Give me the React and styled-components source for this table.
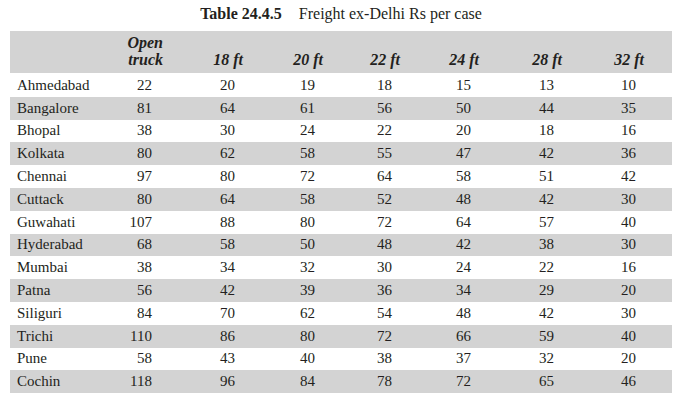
import React from 'react'
import styled, { createGlobalStyle } from 'styled-components'

const GlobalStyle = createGlobalStyle`
  body {
    margin: 0;
    background: #fff;
    font-family: "Liberation Serif", "DejaVu Serif", serif;
    color: #231f20;
  }
`;

const columns = ['Open truck', '18 ft', '20 ft', '22 ft', '24 ft', '28 ft', '32 ft'];

const rows = [
  ['Ahmedabad', 22, 20, 19, 18, 15, 13, 10],
  ['Bangalore', 81, 64, 61, 56, 50, 44, 35],
  ['Bhopal', 38, 30, 24, 22, 20, 18, 16],
  ['Kolkata', 80, 62, 58, 55, 47, 42, 36],
  ['Chennai', 97, 80, 72, 64, 58, 51, 42],
  ['Cuttack', 80, 64, 58, 52, 48, 42, 30],
  ['Guwahati', 107, 88, 80, 72, 64, 57, 40],
  ['Hyderabad', 68, 58, 50, 48, 42, 38, 30],
  ['Mumbai', 38, 34, 32, 30, 24, 22, 16],
  ['Patna', 56, 42, 39, 36, 34, 29, 20],
  ['Siliguri', 84, 70, 62, 54, 48, 42, 30],
  ['Trichi', 110, 86, 80, 72, 66, 59, 40],
  ['Pune', 58, 43, 40, 38, 37, 32, 20],
  ['Cochin', 118, 96, 84, 78, 72, 65, 46],
];

const App = () => {
  return (
    <Page>
      <GlobalStyle />
      <Title>
        <TitleNum>Table 24.4.5</TitleNum>
        <span>Freight ex-Delhi Rs per case</span>
      </Title>
      <Table>
        <HeadRow>
          <span />
          {columns.map((c) => (
            <HeadCell key={c}>
              {c === 'Open truck' ? (<>Open<br />truck</>) : c}
            </HeadCell>
          ))}
        </HeadRow>
        {rows.map((r, i) => (
          <Row key={r[0]} $shaded={i % 2 === 1}>
            <Name>{r[0]}</Name>
            {r.slice(1).map((v, j) => (
              <Num key={j} $first={j === 0}>{v}</Num>
            ))}
          </Row>
        ))}
      </Table>
    </Page>
  )
}

const Page = styled.div`
  width: 682px;
  padding: 4px 10px 0 10px;
  box-sizing: border-box;
`;

const Title = styled.div`
  display: flex;
  justify-content: center;
  gap: 17px;
  font-size: 16px;
  line-height: 20px;
  height: 20px;
  margin-bottom: 7px;
`;

const TitleNum = styled.span`
  font-weight: bold;
`;

const Table = styled.div`
  display: flex;
  flex-direction: column;
  width: 662px;
`;

const grid = `
  display: grid;
  grid-template-columns: 101px 80px 80px 80px 77px 79px 83px 82px;
`;

const HeadRow = styled.div`
  ${grid}
  height: 42px;
  align-items: end;
  background: #d3d3d3;
  margin-bottom: 1px;
  padding-bottom: 5px;
  box-sizing: border-box;
`;

const HeadCell = styled.div`
  text-align: right;
  padding-right: 28px;
  font-weight: bold;
  font-style: italic;
  font-size: 16px;
  line-height: 17px;
`;

const Row = styled.div`
  ${grid}
  height: 22.8px;
  align-items: center;
  font-size: 15px;
  background: ${(p) => (p.$shaded ? '#d3d3d3' : '#fff')};
`;

const Name = styled.div`
  padding-left: 7px;
`;

const Num = styled.div`
  text-align: right;
  padding-right: ${(p) => (p.$first ? '39px' : '36px')};
`;

export default App
